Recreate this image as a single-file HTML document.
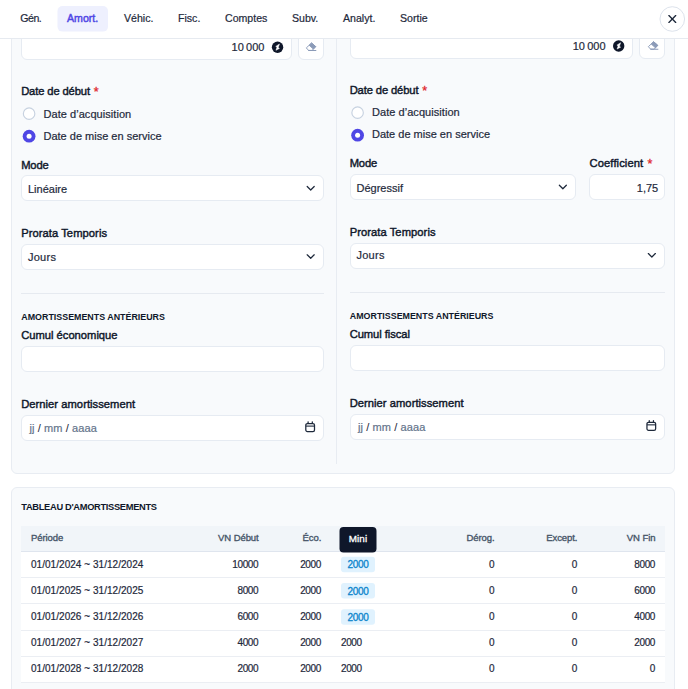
<!DOCTYPE html>
<html lang="fr">
<head>
<meta charset="utf-8">
<title>Immobilisation</title>
<style>
*{box-sizing:border-box;margin:0;padding:0}
html,body{width:688px;height:689px;overflow:hidden;background:#fff}
body{position:relative;font-family:"Liberation Sans",sans-serif;font-size:11px;color:#1e293b}
.abs{position:absolute}
.hdr{position:absolute;left:0;top:0;width:688px;height:39px;background:#fff;border-bottom:1px solid #e6eaf0;z-index:5}
.tab{position:absolute;top:11.1px;height:14px;line-height:14px;font-size:10.6px;color:#1e293b;white-space:nowrap;-webkit-text-stroke:0.2px #1e293b}
.tab.act{color:#4f46e5;-webkit-text-stroke:0.45px #4f46e5}
.tabbg{position:absolute;left:57.5px;top:6px;width:50.5px;height:25.5px;border-radius:5px;background:#eef0fe}
.close{position:absolute;left:659.5px;top:6.5px;width:25px;height:25px;border-radius:50%;border:1px solid #dde3ec;background:#fff}
.card{position:absolute;left:11px;width:664px;background:#f8fafc;border:1px solid #e8ecf2;border-radius:6px}
.lbl{position:absolute;font-size:11.2px;line-height:14px;color:#0f172a;white-space:nowrap;-webkit-text-stroke:0.42px #0f172a;letter-spacing:-0.12px}
.lbl i{font-style:normal;color:#e0262c;-webkit-text-stroke:0.3px #e0262c;font-size:12.5px;position:relative;left:1px;top:0.6px}
.txt{position:absolute;font-size:11px;line-height:14px;color:#1e293b;white-space:nowrap;-webkit-text-stroke:0.2px #1e293b;letter-spacing:0}
.box{position:absolute;background:#fff;border:1px solid #e6ebf2;border-radius:6px}
.sec{position:absolute;font-size:8.9px;font-weight:700;line-height:12px;color:#0f172a;white-space:nowrap}
.hr{position:absolute;height:1px;background:#e6eaf0}
.ph{color:#64748b;-webkit-text-stroke:0.2px #64748b}
.th{position:absolute;letter-spacing:-0.08px;font-size:9.5px;color:#475569;line-height:12px;white-space:nowrap;-webkit-text-stroke:0.35px #475569}
.td{position:absolute;font-size:10px;color:#1e293b;line-height:12px;white-space:nowrap;-webkit-text-stroke:0.2px #1e293b;letter-spacing:0.04px}
.r{text-align:right}
</style>
</head>
<body>
<!-- CARD 1 -->
<div class="card" style="top:-20px;height:494px"></div>
<div class="abs" style="left:336px;top:39px;width:1px;height:425px;background:#e8ecf2"></div>
<div id="c1">
<div class="box" style="left:21px;top:20px;width:270.8px;height:40px"></div>
<div class="txt r" style="left:191.4px;top:40.2px;width:73px;letter-spacing:0">10&#8239;000</div>
<svg class="abs" style="left:271px;top:41px" width="13" height="13" viewBox="0 0 13 13"><g transform="translate(0.55 0.20)"><circle cx="6" cy="6" r="5.7" fill="#0f172a"/><path d="M7.9 2.8L4.2 5.2 5.5 5.8 4.4 9.1 7.9 7.2 6.7 6.4z" fill="#fff" stroke="#fff" stroke-width="0.5" stroke-linejoin="round"/></g></svg>
<div class="box" style="left:298.3px;top:20px;width:25.3px;height:40px"></div>
<svg class="abs" style="left:305px;top:42px" width="12" height="11" viewBox="0 0 12 11"><g transform="translate(0.70 0.40)"><path d="M5.9 0.6L10 4.2 6.4 8H2.9L0.6 5.5z" fill="#fff" stroke="#8b9bb8" stroke-width="0.95" stroke-linejoin="round"/><path d="M5.9 0.6L10 4.2 7.7 6.7 3.5 2.8z" fill="#8b9bb8" stroke="#8b9bb8" stroke-width="0.95" stroke-linejoin="round"/><path d="M2.9 8.1h7.3" stroke="#8b9bb8" stroke-width="1" stroke-linecap="round"/></g></svg>
<div class="lbl" style="left:21.15px;top:84.2px">Date de début <i>*</i></div>
<svg class="abs" style="left:21px;top:100px" width="21" height="51" viewBox="0 0 21 51"><g transform="translate(0.00 0.00)"><circle cx="8.10" cy="13.65" r="5.75" fill="#fff" stroke="#c7d2e0" stroke-width="1.15"/><circle cx="8.10" cy="36.2" r="6.4" fill="#4f46e5"/><circle cx="8.10" cy="36.2" r="2.5" fill="#fff"/></g></svg>
<div class="txt" style="left:43.5px;top:107.2px;letter-spacing:0.05px">Date d’acquisition</div>
<div class="txt" style="left:43.5px;top:129.4px">Date de mise en service</div>
<div class="lbl" style="left:21.15px;top:157.6px">Mode</div>
<div class="box" style="left:21px;top:175px;width:302.6px;height:26px"></div>
<div class="txt" style="left:28px;top:182.4px">Linéaire</div>
<svg class="abs" style="left:306px;top:185px" width="10" height="7" viewBox="0 0 10 7"><g transform="translate(0.30 0.60)"><path d="M0.9 0.9l3.5 3.5 3.5-3.5" fill="none" stroke="#1e293b" stroke-width="1.25" stroke-linecap="round" stroke-linejoin="round"/></g></svg>
<div class="lbl" style="left:21.15px;top:226px;letter-spacing:0.06px">Prorata Temporis</div>
<div class="box" style="left:21px;top:244px;width:302.6px;height:26px"></div>
<div class="txt" style="left:28px;top:249.7px;letter-spacing:0.25px">Jours</div>
<svg class="abs" style="left:306px;top:253px" width="10" height="7" viewBox="0 0 10 7"><g transform="translate(0.30 0.90)"><path d="M0.9 0.9l3.5 3.5 3.5-3.5" fill="none" stroke="#1e293b" stroke-width="1.25" stroke-linecap="round" stroke-linejoin="round"/></g></svg>
<div class="hr" style="left:21px;top:293px;width:302.6px"></div>
<div class="sec" style="left:21.3px;top:311px">AMORTISSEMENTS ANTÉRIEURS</div>
<div class="lbl" style="left:21.15px;top:328px;letter-spacing:0.0px">Cumul économique</div>
<div class="box" style="left:21px;top:346px;width:302.6px;height:26px"></div>
<div class="lbl" style="left:21.15px;top:396.8px;letter-spacing:0.04px">Dernier amortissement</div>
<div class="box" style="left:21px;top:415px;width:302.6px;height:26px"></div>
<div class="txt" style="left:29.5px;top:421.3px;letter-spacing:0.1px;-webkit-text-stroke:0.05px #1e293b"><span class="ph">jj</span> / <span class="ph">mm</span> / <span class="ph">aaaa</span></div>
<svg class="abs" style="left:304px;top:420px" width="13" height="13" viewBox="0 0 13 13"><g transform="translate(0.60 0.70)"><rect x="1.2" y="2.8" width="8.7" height="8.0" rx="1.6" fill="none" stroke="#1e293b" stroke-width="1.25"/><path d="M1.2 5.4h8.7" stroke="#1e293b" stroke-width="1.1" fill="none"/><path d="M3.5 1.1v1.5M7.7 1.1v1.5" stroke="#1e293b" stroke-width="1.25" fill="none" stroke-linecap="round"/></g></svg>
<div class="box" style="left:349.5px;top:18.75px;width:283.45000000000005px;height:39.85px"></div>
<div class="txt r" style="left:532.5500000000001px;top:38.95px;width:73px;letter-spacing:0">10&#8239;000</div>
<svg class="abs" style="left:612px;top:39px" width="13" height="13" viewBox="0 0 13 13"><g transform="translate(0.70 0.95)"><circle cx="6" cy="6" r="5.7" fill="#0f172a"/><path d="M7.9 2.8L4.2 5.2 5.5 5.8 4.4 9.1 7.9 7.2 6.7 6.4z" fill="#fff" stroke="#fff" stroke-width="0.5" stroke-linejoin="round"/></g></svg>
<div class="box" style="left:639.45px;top:18.75px;width:25.3px;height:39.85px"></div>
<svg class="abs" style="left:647px;top:41px" width="12" height="11" viewBox="0 0 12 11"><g transform="translate(0.75 0.15)"><path d="M5.9 0.6L10 4.2 6.4 8H2.9L0.6 5.5z" fill="#fff" stroke="#8b9bb8" stroke-width="0.95" stroke-linejoin="round"/><path d="M5.9 0.6L10 4.2 7.7 6.7 3.5 2.8z" fill="#8b9bb8" stroke="#8b9bb8" stroke-width="0.95" stroke-linejoin="round"/><path d="M2.9 8.1h7.3" stroke="#8b9bb8" stroke-width="1" stroke-linecap="round"/></g></svg>
<div class="lbl" style="left:349.65px;top:82.95px">Date de début <i>*</i></div>
<svg class="abs" style="left:349px;top:99px" width="21" height="51" viewBox="0 0 21 51"><g transform="translate(0.00 0.00)"><circle cx="8.60" cy="13.65" r="5.75" fill="#fff" stroke="#c7d2e0" stroke-width="1.15"/><circle cx="8.60" cy="36.2" r="6.4" fill="#4f46e5"/><circle cx="8.60" cy="36.2" r="2.5" fill="#fff"/></g></svg>
<div class="txt" style="left:372.0px;top:105.10000000000001px;letter-spacing:0.05px">Date d’acquisition</div>
<div class="txt" style="left:372.0px;top:127.30000000000001px">Date de mise en service</div>
<div class="lbl" style="left:349.65px;top:156.35px">Mode</div>
<div class="box" style="left:349.5px;top:174px;width:226.25px;height:26px"></div>
<div class="txt" style="left:356.5px;top:181.15px">Dégressif</div>
<svg class="abs" style="left:558px;top:184px" width="10" height="7" viewBox="0 0 10 7"><g transform="translate(0.45 0.35)"><path d="M0.9 0.9l3.5 3.5 3.5-3.5" fill="none" stroke="#1e293b" stroke-width="1.25" stroke-linecap="round" stroke-linejoin="round"/></g></svg>
<div class="lbl" style="left:589.55px;top:156.35px;letter-spacing:0.1px">Coefficient <i>*</i></div>
<div class="box" style="left:589.25px;top:174px;width:75.5px;height:26px"></div>
<div class="txt r" style="left:604.75px;width:53.5px;top:181.15px">1,75</div>
<div class="lbl" style="left:349.65px;top:224.75px;letter-spacing:0.06px">Prorata Temporis</div>
<div class="box" style="left:349.5px;top:243px;width:315.25px;height:26px"></div>
<div class="txt" style="left:356.5px;top:248.45px;letter-spacing:0.25px">Jours</div>
<svg class="abs" style="left:647px;top:252px" width="10" height="7" viewBox="0 0 10 7"><g transform="translate(0.45 0.65)"><path d="M0.9 0.9l3.5 3.5 3.5-3.5" fill="none" stroke="#1e293b" stroke-width="1.25" stroke-linecap="round" stroke-linejoin="round"/></g></svg>
<div class="hr" style="left:349.5px;top:292px;width:315.25px"></div>
<div class="sec" style="left:349.8px;top:309.75px">AMORTISSEMENTS ANTÉRIEURS</div>
<div class="lbl" style="left:349.65px;top:326.75px;letter-spacing:-0.05px">Cumul fiscal</div>
<div class="box" style="left:349.5px;top:345px;width:315.25px;height:26px"></div>
<div class="lbl" style="left:349.65px;top:395.55px;letter-spacing:0.04px">Dernier amortissement</div>
<div class="box" style="left:349.5px;top:414px;width:315.25px;height:26px"></div>
<div class="txt" style="left:358.0px;top:420.05px;letter-spacing:0.1px;-webkit-text-stroke:0.05px #1e293b"><span class="ph">jj</span> / <span class="ph">mm</span> / <span class="ph">aaaa</span></div>
<svg class="abs" style="left:645px;top:419px" width="13" height="13" viewBox="0 0 13 13"><g transform="translate(0.75 0.45)"><rect x="1.2" y="2.8" width="8.7" height="8.0" rx="1.6" fill="none" stroke="#1e293b" stroke-width="1.25"/><path d="M1.2 5.4h8.7" stroke="#1e293b" stroke-width="1.1" fill="none"/><path d="M3.5 1.1v1.5M7.7 1.1v1.5" stroke="#1e293b" stroke-width="1.25" fill="none" stroke-linecap="round"/></g></svg>
</div>
<!-- CARD 2 -->
<div class="card" style="top:487px;height:260px"></div>
<div id="c2">
<div class="sec" style="left:21.3px;top:500.8px;font-size:9.3px;letter-spacing:-0.32px">TABLEAU D'AMORTISSEMENTS</div>
<div class="abs" style="left:21px;top:526.25px;width:644px;height:25.5px;background:#f1f5f9;border-bottom:1px solid #dfe5ee"></div>
<div class="th" style="left:31px;top:532px">Période</div>
<div class="th r" style="left:178.60000000000002px;width:80px;top:532px">VN Début</div>
<div class="th r" style="left:241.3px;width:80px;top:532px">Éco.</div>
<div class="th r" style="left:414.5px;width:80px;top:532px">Dérog.</div>
<div class="th r" style="left:497.4px;width:80px;top:532px">Except.</div>
<div class="th r" style="left:575.4px;width:80px;top:532px">VN Fin</div>
<div class="abs" style="left:21px;top:552px;width:644px;height:131px;background:#fff"></div>
<div class="abs" style="left:21px;top:577px;width:644px;height:1px;background:#ebeef3"></div>
<div class="abs" style="left:21px;top:603px;width:644px;height:1px;background:#ebeef3"></div>
<div class="abs" style="left:21px;top:630px;width:644px;height:1px;background:#ebeef3"></div>
<div class="abs" style="left:21px;top:656px;width:644px;height:1px;background:#ebeef3"></div>
<div class="abs" style="left:21px;top:682px;width:644px;height:1px;background:#ebeef3"></div>
<div class="td" style="left:31px;top:558.60px">01/01/2024 ~ 31/12/2024</div>
<div class="td r" style="letter-spacing:-0.38px;left:178.22000000000003px;width:80px;top:558.60px">10000</div>
<div class="td r" style="letter-spacing:-0.38px;left:240.92000000000002px;width:80px;top:558.60px">2000</div>
<div class="td r" style="letter-spacing:-0.38px;left:414.12px;width:80px;top:558.60px">0</div>
<div class="td r" style="letter-spacing:-0.38px;left:497.02px;width:80px;top:558.60px">0</div>
<div class="td r" style="letter-spacing:-0.38px;left:575.02px;width:80px;top:558.60px">8000</div>
<svg class="abs" style="left:340px;top:552px" width="37" height="26" viewBox="0 0 37 26"><rect x="1" y="4.75" width="34" height="15.5" rx="3" fill="#e0f2fe"/></svg>
<div class="td" style="font-size:10px;letter-spacing:-0.33px;left:347.5px;top:559.35px;color:#0a84cc;-webkit-text-stroke:0.3px #0a84cc">2000</div>
<div class="td" style="left:31px;top:584.82px">01/01/2025 ~ 31/12/2025</div>
<div class="td r" style="letter-spacing:-0.38px;left:178.22000000000003px;width:80px;top:584.82px">8000</div>
<div class="td r" style="letter-spacing:-0.38px;left:240.92000000000002px;width:80px;top:584.82px">2000</div>
<div class="td r" style="letter-spacing:-0.38px;left:414.12px;width:80px;top:584.82px">0</div>
<div class="td r" style="letter-spacing:-0.38px;left:497.02px;width:80px;top:584.82px">0</div>
<div class="td r" style="letter-spacing:-0.38px;left:575.02px;width:80px;top:584.82px">6000</div>
<svg class="abs" style="left:340px;top:578px" width="37" height="26" viewBox="0 0 37 26"><rect x="1" y="4.97" width="34" height="15.5" rx="3" fill="#e0f2fe"/></svg>
<div class="td" style="font-size:10px;letter-spacing:-0.33px;left:347.5px;top:585.57px;color:#0a84cc;-webkit-text-stroke:0.3px #0a84cc">2000</div>
<div class="td" style="left:31px;top:611.04px">01/01/2026 ~ 31/12/2026</div>
<div class="td r" style="letter-spacing:-0.38px;left:178.22000000000003px;width:80px;top:611.04px">6000</div>
<div class="td r" style="letter-spacing:-0.38px;left:240.92000000000002px;width:80px;top:611.04px">2000</div>
<div class="td r" style="letter-spacing:-0.38px;left:414.12px;width:80px;top:611.04px">0</div>
<div class="td r" style="letter-spacing:-0.38px;left:497.02px;width:80px;top:611.04px">0</div>
<div class="td r" style="letter-spacing:-0.38px;left:575.02px;width:80px;top:611.04px">4000</div>
<svg class="abs" style="left:340px;top:604px" width="37" height="26" viewBox="0 0 37 26"><rect x="1" y="5.19" width="34" height="15.5" rx="3" fill="#e0f2fe"/></svg>
<div class="td" style="font-size:10px;letter-spacing:-0.33px;left:347.5px;top:611.79px;color:#0a84cc;-webkit-text-stroke:0.3px #0a84cc">2000</div>
<div class="td" style="left:31px;top:637.26px">01/01/2027 ~ 31/12/2027</div>
<div class="td r" style="letter-spacing:-0.38px;left:178.22000000000003px;width:80px;top:637.26px">4000</div>
<div class="td r" style="letter-spacing:-0.38px;left:240.92000000000002px;width:80px;top:637.26px">2000</div>
<div class="td r" style="letter-spacing:-0.38px;left:414.12px;width:80px;top:637.26px">0</div>
<div class="td r" style="letter-spacing:-0.38px;left:497.02px;width:80px;top:637.26px">0</div>
<div class="td r" style="letter-spacing:-0.38px;left:575.02px;width:80px;top:637.26px">2000</div>
<div class="td" style="letter-spacing:-0.38px;left:341px;top:637.26px">2000</div>
<div class="td" style="left:31px;top:663.48px">01/01/2028 ~ 31/12/2028</div>
<div class="td r" style="letter-spacing:-0.38px;left:178.22000000000003px;width:80px;top:663.48px">2000</div>
<div class="td r" style="letter-spacing:-0.38px;left:240.92000000000002px;width:80px;top:663.48px">2000</div>
<div class="td r" style="letter-spacing:-0.38px;left:414.12px;width:80px;top:663.48px">0</div>
<div class="td r" style="letter-spacing:-0.38px;left:497.02px;width:80px;top:663.48px">0</div>
<div class="td r" style="letter-spacing:-0.38px;left:575.02px;width:80px;top:663.48px">0</div>
<div class="td" style="letter-spacing:-0.38px;left:341px;top:663.48px">2000</div>
<svg class="abs" style="left:338px;top:526px" width="40" height="28" viewBox="0 0 40 28"><rect x="1.5" y="1" width="37" height="25.5" rx="4" fill="#0f172a"/></svg>
<div class="th" style="left:348.7px;top:532.8px;font-size:9.9px;letter-spacing:0.1px;color:#fff;-webkit-text-stroke:0.3px #fff">Mini</div>
</div>
<!-- HEADER -->
<div class="hdr">
  <svg class="abs" style="left:56px;top:4px" width="54" height="30" viewBox="0 0 54 30"><rect x="1.5" y="2" width="50.5" height="25.6" rx="5" fill="#eef0fe"/></svg>
  <span class="tab" style="left:20.3px;letter-spacing:-0.5px">Gén.</span>
  <span class="tab act" style="left:67px">Amort.</span>
  <span class="tab" style="left:124px">Véhic.</span>
  <span class="tab" style="left:178px">Fisc.</span>
  <span class="tab" style="left:225px">Comptes</span>
  <span class="tab" style="left:292px">Subv.</span>
  <span class="tab" style="left:343px">Analyt.</span>
  <span class="tab" style="left:400px">Sortie</span>
  <svg class="abs" style="left:656px;top:3px" width="32" height="32" viewBox="0 0 32 32"><circle cx="16.3" cy="16" r="12.3" fill="#fff" stroke="#dde3ec" stroke-width="1"/><path d="M12.9 12.6l6.8 6.8M19.7 12.6l-6.8 6.8" stroke="#1e293b" stroke-width="1.35" stroke-linecap="round" fill="none"/></svg>
</div>
</body>
</html>
